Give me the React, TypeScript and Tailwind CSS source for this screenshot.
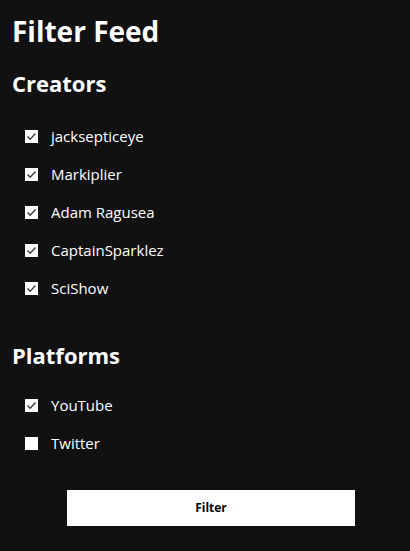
const creators = ["jacksepticeye", "Markiplier", "Adam Ragusea", "CaptainSparklez", "SciShow"];
const platforms = [
  { name: "YouTube", checked: true },
  { name: "Twitter", checked: false },
];

const Box = ({ checked }: { checked: boolean }) => (
  <span className="flex h-[13px] w-[13px] items-center justify-center bg-white">
    {checked && (
      <svg width="11" height="11" viewBox="0 0 11 11" fill="none">
        <path d="M1.5 5.5 L4.2 8.2 L9.5 2.5" stroke="#444" strokeWidth="1.5" />
      </svg>
    )}
  </span>
);

const Row = ({ label, checked }: { label: string; checked: boolean }) => (
  <label className="flex h-[38px] items-center pl-[13px]">
    <Box checked={checked} />
    <span className="ml-[13px] text-[15px] text-white">{label}</span>
  </label>
);

export default function App() {
  return (
    <div className="min-h-[551px] bg-[#111111] px-3 font-['Open_Sans',sans-serif]">
      <h1 className="pt-[14px] text-[28px] leading-[34px] font-bold text-white">Filter Feed</h1>
      <h2 className="mt-[18px] text-[22px] leading-[34px] font-bold text-white">Creators</h2>
      <div className="mt-[17px] flex flex-col">
        {creators.map((c) => (
          <Row key={c} label={c} checked={true} />
        ))}
      </div>
      <h2 className="mt-[31px] text-[22px] leading-[34px] font-bold text-white">Platforms</h2>
      <div className="mt-[14px] flex flex-col">
        {platforms.map((p) => (
          <Row key={p.name} label={p.name} checked={p.checked} />
        ))}
      </div>
      <div className="mt-[28px] flex">
        <button className="ml-[55px] h-[36px] w-[288px] bg-white text-[12px] font-bold text-black">Filter</button>
      </div>
    </div>
  );
}
